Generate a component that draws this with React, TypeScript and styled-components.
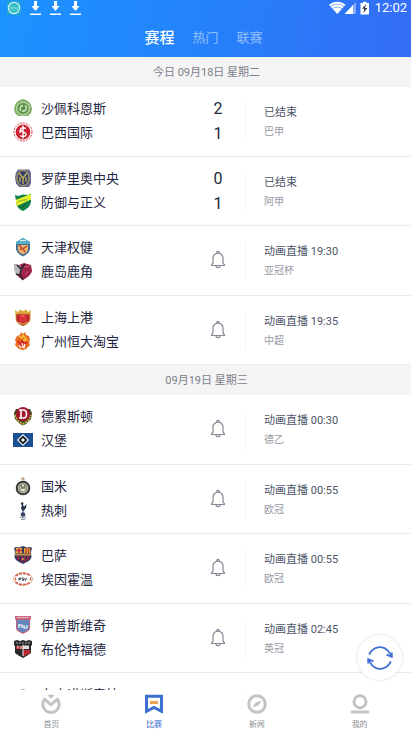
import React from "react";
import styled, { createGlobalStyle } from "styled-components";

const GlobalStyle = createGlobalStyle`
  *, *::before, *::after { box-sizing: border-box; }
  body {
    margin: 0;
    background: #fff;
    font-family: Roboto, "Noto Sans CJK SC", sans-serif;
    color: #1d2540;
  }
  button { font: inherit; border: 0; padding: 0; background: none; cursor: pointer; }
`;

const Screen = styled.div`
  height: 100vh;
  display: flex;
  flex-direction: column;
  overflow: hidden;
`;

const Header = styled.header`
  flex: none;
  color: #fff;
  background: linear-gradient(100deg, #1c93ff 0%, #2581fb 50%, #346df6 100%);
`;

const StatusBar = styled.div`
  height: 16px;
  padding: 0 4px 0 7px;
  display: flex;
  align-items: center;
  justify-content: space-between;
`;

const StatusGroup = styled.div<{ $gap: number }>`
  display: flex;
  align-items: center;
  gap: ${(p) => p.$gap}px;
`;

const Clock = styled.time`
  font-size: 13px;
  line-height: 16px;
  margin-left: 4px;
`;

const Tabs = styled.nav`
  height: 41px;
  padding: 2px 4px 0 0;
  display: flex;
  align-items: center;
  justify-content: center;
  gap: 18px;
`;

const Tab = styled.button<{ $active?: boolean }>`
  color: ${(p) => (p.$active ? "#fff" : "rgba(255, 255, 255, 0.5)")};
  font-size: ${(p) => (p.$active ? 15 : 13)}px;
  font-weight: ${(p) => (p.$active ? 500 : 400)};
  line-height: 24px;
`;

const List = styled.main`
  flex: 1;
  min-height: 0;
  overflow-y: auto;
  scrollbar-width: none;
`;

const DateBar = styled.h2`
  margin: 0;
  height: 30px;
  padding: 1px 0 0 2px;
  background: #f4f4f4;
  color: #7e808c;
  font-size: 11px;
  font-weight: 400;
  line-height: 30px;
  text-align: center;
`;

const Group = styled.section<{ $full?: boolean }>`
  display: grid;
  grid-auto-rows: 1fr;
  height: ${(p) => (p.$full ? "278px" : "auto")};
`;

const Row = styled.article`
  display: grid;
  grid-template-columns: 1fr 54px 166px;
  padding-top: 9px;
  border-bottom: 1px solid #ececee;
`;

const Teams = styled.div`
  padding-left: 13px;
`;

const Team = styled.div`
  display: flex;
  align-items: center;
  gap: 8px;
  height: 24px;
  font-size: 13px;
  white-space: nowrap;
`;

const TeamName = styled.span`
  padding-bottom: 1px;
`;

const Result = styled.div`
  display: flex;
  flex-direction: column;
  align-items: center;
  height: 50px;
  justify-content: center;
`;

const Score = styled.span`
  font-size: 16px;
  line-height: 25px;
  color: #23283a;
`;

const Bell = styled.button`
  display: block;
  width: 16px;
  height: 20px;
`;

const Info = styled.div`
  height: 38px;
  margin-top: 7px;
  padding-left: 18px;
  border-left: 1px solid #f6f6f8;
`;

const Status = styled.div`
  font-size: 11px;
  line-height: 19px;
  color: #4d5468;
  white-space: nowrap;
`;

const League = styled.div`
  font-size: 10px;
  line-height: 20px;
  color: #989aa6;
`;

const Refresh = styled.button`
  position: fixed;
  right: 9px;
  bottom: 51px;
  width: 45px;
  height: 45px;
  border-radius: 50%;
  background: #fff;
  box-shadow: 0 0 3px rgba(0, 0, 0, 0.16);
  display: grid;
  place-items: center;
`;

const BottomNav = styled.nav`
  flex: none;
  height: 41px;
  background: #fff;
  display: grid;
  grid-template-columns: repeat(4, 1fr);
`;

const NavLink = styled.a<{ $active?: boolean }>`
  display: flex;
  flex-direction: column;
  align-items: center;
  padding-top: 4px;
  gap: 5px;
  font-size: 8px;
  line-height: 12px;
  text-decoration: none;
  color: ${(p) => (p.$active ? "#2f66cc" : "#8d8f96")};
`;

const crests: Record<string, React.ReactNode> = {
  chapecoense: (
    <>
      <path d="M10 1l3 1 3 2 2 3 1 4-1 4-3 3H5l-3-3-1-4 1-4 2-3 3-2z" fill="#7fae66" />
      <circle cx="10" cy="10.500" r="6.600" fill="none" stroke="#c7dcb9" strokeWidth="1" />
      <circle cx="10" cy="10.500" r="5" fill="#5a9447" />
      <path d="M7.500 13c-1-3 0-5 2.500-5.500M12 7.500c2 1.500 1.500 4.500-.5 5.500H9" fill="none" stroke="#e5f0dd" strokeWidth="1.300" />
    </>
  ),
  internacional: (
    <>
      <circle cx="10" cy="10" r="9" fill="#fff" stroke="#d5414c" strokeWidth="1" strokeDasharray="2 1" />
      <circle cx="10" cy="10" r="7.400" fill="#c9202f" />
      <path d="M13 6.500c-4-2-7 .5-4.500 2.500 2 1.500 5 1.500 4.500 4-.5 2-4 2-6 .5M10 3.500v13M7 8v3" fill="none" stroke="#fff" strokeWidth="1.400" />
    </>
  ),
  rosario: (
    <>
      <path d="M5 1.500h11l2 3v11l-2 3.500H6l-3-3.500-1-6 1-5z" fill="#666a88" />
      <ellipse cx="10" cy="10" rx="6" ry="7.500" fill="#34406f" stroke="#b9a75b" strokeWidth="1" />
      <path d="M6 5l4 5 4-5M10 9v7M7 9v5M13 9v5" fill="none" stroke="#c9b658" strokeWidth="1.300" />
    </>
  ),
  defensa: (
    <>
      <path d="M2 3l3 1 5-1.500L15 3l3-1.500V9c0 5-4 8-8 10-4-1.500-7-5-7-10z" fill="#14834a" />
      <path d="M2.500 8L18 2v5.500L4 14z" fill="#e8ef2c" />
      <path d="M5 10.500l1-2 1 1.500 1-2 1 1.500 1-2 1 1.500 1-2 1 1.500 1.500-2" fill="none" stroke="#8fbd35" strokeWidth=".9" />
      <path d="M6 15c3 1 5-1 6-3" fill="none" stroke="#0c6636" strokeWidth="1.500" />
    </>
  ),
  tianjin: (
    <>
      <path d="M3 5l7-4 7 4v6c0 4-3 6.500-7 8.500-4-2-7-4.500-7-8.500z" fill="#3e6f94" />
      <path d="M3 5l7-4 7 4v2H3z" fill="#59aec6" />
      <path d="M5 8h10v4c0 2.500-2 4-5 5.500C7 16 5 14.500 5 12z" fill="#efb56a" />
      <path d="M6 8l3 3-2 2M14 9l-4 3 2 3" fill="none" stroke="#b5482d" strokeWidth="1.400" />
      <path d="M7 3.500h6" stroke="#d7eef2" />
    </>
  ),
  kashima: (
    <>
      <path d="M1 3l5 1 5-2 7 2 1 6c-1 4-5 7-9 9-4-2-7-5-8-9z" fill="#9d2449" />
      <path d="M1 3l5 1 3 3-1 4-4 4C1 11 1 7 1 3z" fill="#b9b9bf" />
      <path d="M4 4l4 4-1 6 3 5M8 8l4-5M6 14l-3-1" fill="none" stroke="#27232c" strokeWidth="1.500" />
      <path d="M11 6l3-1M14 6l3-1M12 13l3-2" stroke="#d1577a" strokeWidth="1" />
    </>
  ),
  sipg: (
    <>
      <path d="M2 3l3 2 2-2.500L10 4l3-1.500L15 5l3-2-.5 5h-15z" fill="#d9a93b" />
      <path d="M3 7h14v5c0 3-3 5-7 7-4-2-7-4-7-7z" fill="#ba252e" stroke="#d79b35" strokeWidth=".8" />
      <circle cx="10" cy="11" r="4" fill="#dc3038" />
      <path d="M8.500 9.500l1.500-1 1.500 1" fill="none" stroke="#f27a5c" strokeWidth="1.200" />
      <path d="M5 15l5 2 5-2" fill="none" stroke="#ddb24d" />
    </>
  ),
  evergrande: (
    <>
      <path d="M8 1l2 2 2-2 1 3 3 1 1 4-1 2 1 3-4 4-3 1-4-1-4-4 1-3-1-2 2-4 3-1z" fill="#e86b20" />
      <path d="M6 5l3 2 1-3 3 4-2 1 4 1" fill="none" stroke="#f8c13b" strokeWidth="1.500" />
      <path d="M5 10l3 4 1-4 3 4 2-4" fill="none" stroke="#d0242a" strokeWidth="1.700" />
      <path d="M6 14l2 3M9 12l1 5M12 13l-1 4" stroke="#fff" strokeWidth="1.200" />
    </>
  ),
  dresden: (
    <>
      <path d="M1 7l2-4h14l2 4-1 6-5 5-3 1.500L7 18l-5-5z" fill="#454329" />
      <path d="M2 9l3 6 5 3 5-3 3-6" fill="none" stroke="#d7b842" strokeWidth="1.600" strokeDasharray="2 1" />
      <circle cx="10" cy="8" r="7" fill="#a3172d" />
      <path d="M8 4v8M6 4h4.500c4 0 4 8 0 8H6" fill="none" stroke="#fff" strokeWidth="1.600" />
    </>
  ),
  hamburg: (
    <>
      <path d="M0 3h20v14H0z" fill="#1c4f91" />
      <path d="M10 4l6 6-6 6-6-6z" fill="#fff" />
      <path d="M10 5.500l4.500 4.500-4.500 4.500L5.500 10z" fill="#111723" />
      <path d="M10 8l2 2-2 2-2-2z" fill="#fff" />
    </>
  ),
  inter: (
    <>
      <path d="M10 .5l.8 1.500 1.600.2-1.200 1 .3 1.500-1.500-.8-1.500.8.3-1.500-1.200-1 1.600-.2z" fill="#b8a984" />
      <circle cx="10" cy="12" r="6.300" fill="#d9cf9f" stroke="#343b41" strokeWidth="2" />
      <circle cx="10" cy="12" r="4" fill="#f2eddb" stroke="#58605d" strokeWidth=".8" />
      <path d="M8 14V9l2 4 2-4v5M8 11h4" fill="none" stroke="#6f7159" strokeWidth="1" />
    </>
  ),
  spurs: (
    <>
      <path d="M7.500 3.500L9.500 2l1 1-.5 2.500 1.500 1L13.500 4l-.5 4-2 2.500H9L8 8l1-2.500z" fill="#24354f" />
      <path d="M10 10v3" stroke="#24354f" strokeWidth="1" />
      <circle cx="10" cy="14.500" r="2.300" fill="#334765" />
      <path d="M7 18l1.500-1 1.500 1 1.500-1 1.500 1M8 19.300h4" fill="none" stroke="#59687d" strokeWidth=".8" />
    </>
  ),
  barcelona: (
    <>
      <path d="M1 3l2-1 3 .5L10 1l4 1.500 3-.5 2 1-1 4 .5 5c-1 4-5 5-8.500 7-3.500-2-7.500-3-8.500-7L2 7z" fill="#34385d" />
      <path d="M3 3h6v5H2.500z" fill="#e9b84f" />
      <path d="M6 3v5M3 5.500h6" stroke="#c52c3d" strokeWidth="1.500" />
      <path d="M11 3h6l.5 5H11z" fill="#e6af2c" />
      <path d="M13 3v5M15.500 3v5" stroke="#bd2b32" strokeWidth="1.200" />
      <path d="M2 8.500h16v2H2z" fill="#c79347" />
      <path d="M5 11v4M8.500 11v6M12 11v6M15 11v4" stroke="#9c2445" strokeWidth="1.700" />
      <circle cx="10" cy="14" r="1.300" fill="#b98a41" />
    </>
  ),
  psv: (
    <>
      <ellipse cx="10" cy="10" rx="9.500" ry="6.300" fill="#fff" stroke="#dcb393" strokeWidth="1" />
      <path d="M2.500 7c4-3.500 11-3.500 15 0M2.500 13c4 3.500 11 3.500 15 0" fill="none" stroke="#cf5548" strokeWidth="1.600" strokeDasharray="3 1" />
      <path d="M6 11.500V9h1.500v1.500H6M10.500 9H9v1h1.500v1.500H9M11.500 9l1 2.500 1-2.500" fill="none" stroke="#38364b" strokeWidth=".9" />
      <path d="M2.500 8.500v3M17.500 8.500v3" stroke="#cf6038" strokeWidth="1.200" />
    </>
  ),
  ipswich: (
    <>
      <path d="M2 1h16v3l-1 1v8c0 3-4 4-7 6-3-2-7-3-7-6V5L2 4z" fill="#c7607c" />
      <path d="M4 5h12v8c0 2-3 3-6 4.500C7 16 4 15 4 13z" fill="#5f86bd" />
      <path d="M4 2.500h12" stroke="#e8b4c0" strokeWidth="1.200" />
      <path d="M6 9v4M6 10h3v3M11 10v3h3v-3" fill="none" stroke="#fff" strokeWidth="1.200" />
    </>
  ),
  brentford: (
    <>
      <path d="M1 2l3-1 3 1 3-1 3 1 3-1 3 1v4l-1 1v7c-2 2-5 3-8 5-3-2-6-3-8-5V7L1 6z" fill="#29282b" />
      <path d="M3 4h2M6 4h2M9 4h2M12 4h2M15 4h2" stroke="#aaa6a6" strokeWidth="1" />
      <path d="M3 7h7v3H3zM10 11h7v3.500l-7 3z" fill="#b92a34" />
      <path d="M10 6.500h6V10h-6z" fill="#e4dbd8" />
      <path d="M5 6.500v3M8 7v3M10 6v11" stroke="#f4eeee" strokeWidth="1" />
    </>
  ),
  racing: (
    <>
      <circle cx="10" cy="13" r="7.500" fill="#263d57" />
      <circle cx="10" cy="13" r="4.500" fill="#dce2e8" />
    </>
  ),
};

const Crest = ({ id }: { id: string }) => (
  <svg width="20" height="20" viewBox="0 0 20 20" aria-hidden="true">
    {crests[id]}
  </svg>
);

const BellIcon = () => (
  <svg width="16" height="20" viewBox="0 0 16 20" fill="none" stroke="#868996" strokeWidth="1.200" strokeLinejoin="round" strokeLinecap="round" aria-hidden="true">
    <path d="M6.700 3.300V2.700a1.300 1.300 0 0 1 2.600 0v.6" />
    <path d="M3 13V8a5 4.900 0 0 1 10 0v5l1.500 1.800v.7h-13v-.7z" />
    <path d="M6 15.800a2 1.900 0 0 0 4 0" />
  </svg>
);

const DownloadIcon = () => (
  <svg width="11" height="14" viewBox="0 0 11 14" fill="#fff" aria-hidden="true">
    <path d="M4 0h3v5h2.500l-4 5-4-5H4zM0 12.500h11V14H0z" />
  </svg>
);

const AppBadge = () => (
  <svg width="14" height="14" viewBox="0 0 14 14" aria-hidden="true">
    <rect width="14" height="14" rx="1" fill="#23a5cf" />
    <circle cx="7" cy="7" r="5.600" fill="#38bcc6" stroke="#c9f2f4" strokeWidth="1.200" />
    <path d="M3.500 8.500V6h1.500v2.500M6 8.500V6h2v2.500M9 6v2.500h1.500V6" fill="none" stroke="#8ce0e4" strokeWidth=".7" />
  </svg>
);

const SignalIcons = () => (
  <svg width="42" height="14" viewBox="0 0 42 14" fill="#fff" aria-hidden="true">
    <path d="M0 3.700C5-.4 11.500-.4 16.500 3.700L8.300 13z" />
    <path d="M1.500 5.500c4.500-3.200 9-3.200 13.500 0M3.500 7.800c3-2.200 6.500-2.200 9.500 0" fill="none" stroke="#5fa0ff" strokeWidth=".8" />
    <path d="M27 1v12h-4V5z" opacity=".4" />
    <path d="M15.500 13L24 4v9z" />
    <path d="M34 2V.8h3.500V2H40v11.500h-8.500V2z" />
    <path d="M37 3l-4 4.700h2.300L34.300 12l4.200-5H36z" fill="#333b4a" />
  </svg>
);

const RefreshIcon = () => (
  <svg width="26" height="26" viewBox="0 0 26 26" fill="none" stroke="#3f70d4" strokeWidth="1.800" aria-hidden="true">
    <path d="M2.200 9.600A11.300 11.300 0 0 1 24 11.800" />
    <path d="M24.800 7.500v4.300l-5.300-2.200" />
    <path d="M23.800 16.400A11.300 11.300 0 0 1 2 14.200" />
    <path d="M1.200 18.500v-4.300l5.300 2.200" />
  </svg>
);

const navIcons: Record<string, React.ReactNode> = {
  home: (
    <>
      <path d="M3.600 5.200A8.200 8.200 0 1 0 16.400 5.200L10 10.800z" fill="none" stroke="#c4c4c6" strokeWidth="3" strokeLinejoin="round" />
      <path d="M6.500 1.500Q10-.3 13.500 1.500L10 4.800z" fill="#c4c4c6" />
    </>
  ),
  match: (
    <>
      <path d="M2.500 2.300h15v15L10 13.500l-7.500 3.800z" fill="none" stroke="#3e70cf" strokeWidth="3" />
      <path d="M6 7h8v3H6z" fill="#eba253" />
    </>
  ),
  news: (
    <>
      <circle cx="10" cy="10" r="8.300" fill="none" stroke="#c4c4c6" strokeWidth="3" />
      <path d="M14.500 6.500l-3 5-6 2 3-5z" fill="#c4c4c6" />
    </>
  ),
  mine: (
    <>
      <circle cx="10" cy="7.700" r="6" fill="none" stroke="#c4c4c6" strokeWidth="3" />
      <path d="M2 18h16" stroke="#c4c4c6" strokeWidth="3" strokeLinecap="round" />
    </>
  ),
};

const NavIcon = ({ id }: { id: string }) => (
  <svg width="20" height="20" viewBox="0 0 20 20" aria-hidden="true">
    {navIcons[id]}
  </svg>
);

type Match = {
  home: [string, string];
  away: [string, string];
  score?: [number, number];
  status: string;
  league: string;
};

const today: Match[] = [
  { home: ["沙佩科恩斯", "chapecoense"], away: ["巴西国际", "internacional"], score: [2, 1], status: "已结束", league: "巴甲" },
  { home: ["罗萨里奥中央", "rosario"], away: ["防御与正义", "defensa"], score: [0, 1], status: "已结束", league: "阿甲" },
  { home: ["天津权健", "tianjin"], away: ["鹿岛鹿角", "kashima"], status: "动画直播 19:30", league: "亚冠杯" },
  { home: ["上海上港", "sipg"], away: ["广州恒大淘宝", "evergrande"], status: "动画直播 19:35", league: "中超" },
];

const tomorrow: Match[] = [
  { home: ["德累斯顿", "dresden"], away: ["汉堡", "hamburg"], status: "动画直播 00:30", league: "德乙" },
  { home: ["国米", "inter"], away: ["热刺", "spurs"], status: "动画直播 00:55", league: "欧冠" },
  { home: ["巴萨", "barcelona"], away: ["埃因霍温", "psv"], status: "动画直播 00:55", league: "欧冠" },
  { home: ["伊普斯维奇", "ipswich"], away: ["布伦特福德", "brentford"], status: "动画直播 02:45", league: "英冠" },
];

const later: Match[] = [
  { home: ["布宜诺斯竞技", "racing"], away: ["防御与正义", "defensa"], status: "动画直播 06:00", league: "阿甲" },
];

const MatchRow = ({ match }: { match: Match }) => (
  <Row>
    <Teams>
      {[match.home, match.away].map(([name, crest]) => (
        <Team key={name}>
          <Crest id={crest} />
          <TeamName>{name}</TeamName>
        </Team>
      ))}
    </Teams>
    <Result>
      {match.score ? (
        match.score.map((n, i) => <Score key={i}>{n}</Score>)
      ) : (
        <Bell aria-label="提醒">
          <BellIcon />
        </Bell>
      )}
    </Result>
    <Info>
      <Status>{match.status}</Status>
      <League>{match.league}</League>
    </Info>
  </Row>
);

const MatchGroup = ({ matches, full }: { matches: Match[]; full?: boolean }) => (
  <Group $full={full}>
    {matches.map((m) => (
      <MatchRow key={m.home[0]} match={m} />
    ))}
  </Group>
);

export default function App() {
  return (
    <Screen>
      <GlobalStyle />
      <Header>
        <StatusBar>
          <StatusGroup $gap={9}>
            <AppBadge />
            <DownloadIcon />
            <DownloadIcon />
            <DownloadIcon />
          </StatusGroup>
          <StatusGroup $gap={0}>
            <SignalIcons />
            <Clock>12:02</Clock>
          </StatusGroup>
        </StatusBar>
        <Tabs>
          <Tab $active>赛程</Tab>
          <Tab>热门</Tab>
          <Tab>联赛</Tab>
        </Tabs>
      </Header>
      <List>
        <DateBar>今日 09月18日 星期二</DateBar>
        <MatchGroup matches={today} full />
        <DateBar>09月19日 星期三</DateBar>
        <MatchGroup matches={tomorrow} full />
        <MatchGroup matches={later} />
      </List>
      <Refresh aria-label="刷新">
        <RefreshIcon />
      </Refresh>
      <BottomNav>
        <NavLink href="#home"><NavIcon id="home" />首页</NavLink>
        <NavLink href="#match" $active aria-current="page"><NavIcon id="match" />比赛</NavLink>
        <NavLink href="#news"><NavIcon id="news" />新闻</NavLink>
        <NavLink href="#mine"><NavIcon id="mine" />我的</NavLink>
      </BottomNav>
    </Screen>
  );
}
